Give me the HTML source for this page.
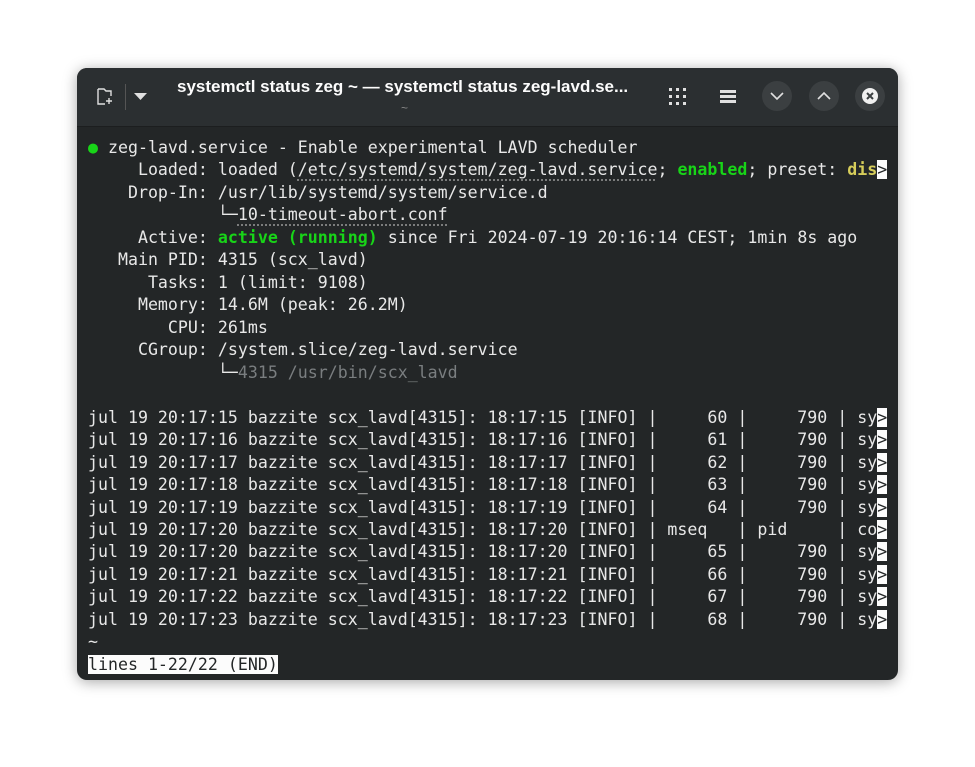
<!DOCTYPE html>
<html><head><style>
body{margin:0;width:975px;height:767px;background:#fff;position:relative;overflow:hidden}
.win{position:absolute;left:77px;top:68px;width:821px;height:612px;border-radius:10px;background:#232627;box-shadow:0 2px 14px rgba(0,0,0,.35);overflow:hidden}
.hd{position:absolute;left:0;top:0;width:821px;height:58px;background:#2b2f31;border-bottom:1px solid #1c1e1f}
.title{position:absolute;left:100px;width:357px;top:9px;text-align:center;font:bold 17px "Liberation Sans",sans-serif;color:#fcfcfc;white-space:nowrap}
.sub{position:absolute;left:324px;top:33px;color:#888;font:12px "Liberation Sans",sans-serif}
.cb{position:absolute;top:13px;width:30px;height:30px;border-radius:50%;background:#3b3f41}
pre{position:absolute;left:11px;top:69px;margin:0;font:16.6px/22.47px "DejaVu Sans Mono",monospace;color:#e8e8e8;white-space:pre}
.g{color:#18d418;font-weight:bold}.gd{color:#18d418}.y{color:#d6cd5a;font-weight:bold}.gr{color:#7a7e80}
.w{background:#fcfcfc;color:#232627}
.u{text-decoration:underline dotted #888;text-underline-offset:4px}
</style></head><body>
<div class="win">
<div class="hd">
<svg style="position:absolute;left:20px;top:20px" width="18" height="18" viewBox="0 0 18 18" fill="none" stroke="#e0e0e0" stroke-width="1.4"><path d="M1 1h6l2 2h5v5M1 1v15h7"/><path d="M12 10v6M9 13h6"/></svg>
<div style="position:absolute;left:48px;top:16px;width:1px;height:26px;background:#555"></div>
<svg style="position:absolute;left:57px;top:25px" width="13" height="8"><path d="M0 0h13L6.5 7z" fill="#e0e0e0"/></svg>
<div class="title">systemctl status zeg ~ — systemctl status zeg-lavd.se...</div>
<div class="sub">~</div>
<svg style="position:absolute;left:592px;top:20px" width="17" height="17" fill="#e0e0e0"><rect x="0" y="0" width="3" height="3"/><rect x="7" y="0" width="3" height="3"/><rect x="14" y="0" width="3" height="3"/><rect x="0" y="7" width="3" height="3"/><rect x="7" y="7" width="3" height="3"/><rect x="14" y="7" width="3" height="3"/><rect x="0" y="14" width="3" height="3"/><rect x="7" y="14" width="3" height="3"/><rect x="14" y="14" width="3" height="3"/></svg>
<svg style="position:absolute;left:643px;top:22px" width="16" height="13" fill="#e0e0e0"><rect y="0" width="16" height="3"/><rect y="5" width="16" height="3"/><rect y="10" width="16" height="3"/></svg>
<div class="cb" style="left:685px"><svg width="30" height="30" fill="none" stroke="#e0e0e0" stroke-width="1.6"><path d="M9 12l6 6 6-6"/></svg></div>
<div class="cb" style="left:732px"><svg width="30" height="30" fill="none" stroke="#e0e0e0" stroke-width="1.6"><path d="M9 18l6-6 6 6"/></svg></div>
<div class="cb" style="left:778px"><svg width="30" height="30"><circle cx="15" cy="15" r="8" fill="#f0f0f0"/><path d="M12 12l6 6M18 12l-6 6" stroke="#3b3f41" stroke-width="2"/></svg></div>
</div>
<pre><span class="gd">●</span> zeg-lavd.service - Enable experimental LAVD scheduler
     Loaded: loaded (<span class="u">/etc/systemd/system/zeg-lavd.service</span>; <span class="g">enabled</span>; preset: <span class="y">dis</span><span class="w">&gt;</span>
    Drop-In: /usr/lib/systemd/system/service.d
             └─<span class="u">10-timeout-abort.conf</span>
     Active: <span class="g">active (running)</span> since Fri 2024-07-19 20:16:14 CEST; 1min 8s ago
   Main PID: 4315 (scx_lavd)
      Tasks: 1 (limit: 9108)
     Memory: 14.6M (peak: 26.2M)
        CPU: 261ms
     CGroup: /system.slice/zeg-lavd.service
             └─<span class="gr">4315 /usr/bin/scx_lavd</span>

jul 19 20:17:15 bazzite scx_lavd[4315]: 18:17:15 [INFO] |     60 |     790 | sy<span class="w">&gt;</span>
jul 19 20:17:16 bazzite scx_lavd[4315]: 18:17:16 [INFO] |     61 |     790 | sy<span class="w">&gt;</span>
jul 19 20:17:17 bazzite scx_lavd[4315]: 18:17:17 [INFO] |     62 |     790 | sy<span class="w">&gt;</span>
jul 19 20:17:18 bazzite scx_lavd[4315]: 18:17:18 [INFO] |     63 |     790 | sy<span class="w">&gt;</span>
jul 19 20:17:19 bazzite scx_lavd[4315]: 18:17:19 [INFO] |     64 |     790 | sy<span class="w">&gt;</span>
jul 19 20:17:20 bazzite scx_lavd[4315]: 18:17:20 [INFO] | mseq   | pid     | co<span class="w">&gt;</span>
jul 19 20:17:20 bazzite scx_lavd[4315]: 18:17:20 [INFO] |     65 |     790 | sy<span class="w">&gt;</span>
jul 19 20:17:21 bazzite scx_lavd[4315]: 18:17:21 [INFO] |     66 |     790 | sy<span class="w">&gt;</span>
jul 19 20:17:22 bazzite scx_lavd[4315]: 18:17:22 [INFO] |     67 |     790 | sy<span class="w">&gt;</span>
jul 19 20:17:23 bazzite scx_lavd[4315]: 18:17:23 [INFO] |     68 |     790 | sy<span class="w">&gt;</span>
~
<span class="w">lines 1-22/22 (END)</span></pre>
</div>
</body></html>
